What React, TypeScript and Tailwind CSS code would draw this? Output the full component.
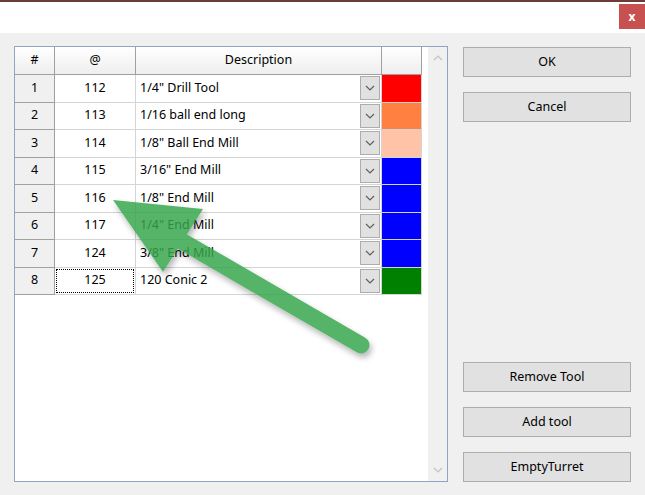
import React from 'react';

type Row = { n: number; at: number; desc: string; color: string };

const rows: Row[] = [
  { n: 1, at: 112, desc: '1/4" Drill Tool', color: 'bg-[#ff0000]' },
  { n: 2, at: 113, desc: '1/16 ball end long', color: 'bg-[#ff8040]' },
  { n: 3, at: 114, desc: '1/8" Ball End Mill', color: 'bg-[#ffc4a8]' },
  { n: 4, at: 115, desc: '3/16" End Mill', color: 'bg-[#0000ff]' },
  { n: 5, at: 116, desc: '1/8" End Mill', color: 'bg-[#0000ff]' },
  { n: 6, at: 117, desc: '1/4" End Mill', color: 'bg-[#0000ff]' },
  { n: 7, at: 124, desc: '3/8" End Mill', color: 'bg-[#0000ff]' },
  { n: 8, at: 125, desc: '120 Conic 2', color: 'bg-[#008000]' },
];

function Chevron({ up = false, className = '' }: { up?: boolean; className?: string }) {
  return (
    <svg width="10" height="6" viewBox="0 0 10 6" className={className}>
      <polyline
        points={up ? '1,5 5,1 9,5' : '1,1 5,5 9,1'}
        fill="none"
        stroke="currentColor"
        strokeWidth="1.2"
      />
    </svg>
  );
}

function WinButton({ label }: { label: string }) {
  return (
    <button className="h-[30px] w-[168px] bg-[#e1e1e1] border border-[#adadad] text-[12.5px] text-black">
      {label}
    </button>
  );
}

function GridRow({ row, focused }: { row: Row; focused: boolean }) {
  return (
    <div className="flex h-[27.5px] border-b border-[#d4d4d4]">
      <div className="w-[40px] flex items-center justify-center bg-[#f0f0f0] border-r border-[#a0a0a0] border-b border-b-[#a0a0a0] -mb-px">
        {row.n}
      </div>
      <div className="w-[81px] flex border-r border-[#d4d4d4] bg-white">
        <div
          className={
            'flex-1 flex items-center justify-center ' +
            (focused ? 'border border-dotted border-black m-px' : '')
          }
        >
          {row.at}
        </div>
      </div>
      <div className="w-[246px] flex items-center border-r border-[#d4d4d4] bg-white pl-[4px] pr-px">
        <span className="flex-1 truncate">{row.desc}</span>
        <div className="w-[20px] h-[24px] bg-[#e1e1e1] border border-[#adadad] flex items-center justify-center text-[#606060]">
          <Chevron />
        </div>
      </div>
      <div className="w-[40px] border-r border-[#d4d4d4] bg-white">
        <div className={'h-full w-full ' + row.color} />
      </div>
    </div>
  );
}

export default function App() {
  return (
    <div
      className="relative w-[645px] h-[495px] overflow-hidden bg-[#f0f0f0] text-[12.5px] text-black"
      style={{ fontFamily: '"Segoe UI", "Noto Sans", "Open Sans", sans-serif' }}
    >
      {/* Title bar */}
      <div className="h-[33px] bg-white border-t-2 border-[#6e3b3b] flex justify-end">
        <div className="mt-[2px] w-[26px] h-[25px] bg-[#c75050] flex items-center justify-center text-white text-[12px] font-bold">
          x
        </div>
      </div>

      {/* Body */}
      <div className="flex pl-[14px] pt-[13px] gap-[15px]">
        {/* Grid */}
        <div className="w-[434px] h-[436px] border border-[#8ea6c6] bg-white flex">
          <div className="w-[407px] flex flex-col">
            {/* Header */}
            <div className="flex h-[28px] border-b border-[#a0a0a0] bg-gradient-to-b from-white to-[#eeeeee]">
              <div className="w-[40px] flex items-center justify-center border-r border-[#a0a0a0]">#</div>
              <div className="w-[81px] flex items-center justify-center border-r border-[#a0a0a0]">@</div>
              <div className="w-[246px] flex items-center justify-center border-r border-[#a0a0a0]">
                Description
              </div>
              <div className="w-[40px] border-r border-[#a0a0a0]" />
            </div>
            {rows.map((r) => (
              <GridRow key={r.n} row={r} focused={r.n === 8} />
            ))}
          </div>
          <div className="w-[6px]" />
          {/* Scrollbar */}
          <div className="w-[19px] bg-[#f0f0f0] flex flex-col items-center justify-between py-[8px] text-[#c2c2c2]">
            <Chevron up />
            <Chevron />
          </div>
        </div>

        {/* Buttons */}
        <div className="h-[436px] flex flex-col justify-between pt-px">
          <div className="flex flex-col gap-[15px]">
            <WinButton label="OK" />
            <WinButton label="Cancel" />
          </div>
          <div className="flex flex-col gap-[15px]">
            <WinButton label="Remove Tool" />
            <WinButton label="Add tool" />
            <WinButton label="EmptyTurret" />
          </div>
        </div>
      </div>

      {/* Green annotation arrow */}
      <svg
        className="absolute inset-0 pointer-events-none"
        width="645"
        height="495"
        viewBox="0 0 645 495"
      >
        <defs>
          <filter id="sh" x="-20%" y="-20%" width="140%" height="140%">
            <feDropShadow dx="2" dy="4" stdDeviation="3" floodColor="#000" floodOpacity="0.35" />
          </filter>
        </defs>
        <g filter="url(#sh)" opacity="0.84">
          <line x1="361" y1="345" x2="178" y2="239" stroke="#35a64c" strokeWidth="17" strokeLinecap="round" />
          <polygon points="113,200 203,209 163,272" fill="#35a64c" />
        </g>
      </svg>
    </div>
  );
}
